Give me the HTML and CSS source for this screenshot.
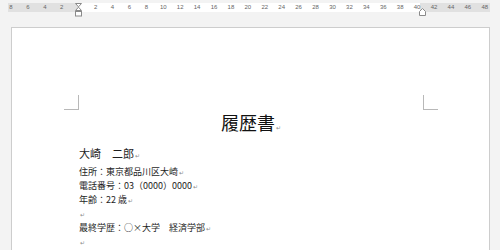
FILE: index.html
```html
<!DOCTYPE html>
<html lang="ja">
<head>
<meta charset="utf-8">
<title>履歴書</title>
<link rel="stylesheet" href="styles.css">
</head>
<body>
<div class="app">
  <div class="ruler">
    <div class="band"></div>
    <div class="ticks">
      <span class="tick">8</span><span class="tick">6</span><span class="tick">4</span><span class="tick">2</span>
      <span class="tick marker">
        <svg class="indent-left" width="8" height="14" viewBox="0 0 8 14">
          <path d="M0.5 0.5 H6.5 L3.5 3.8 Z" fill="#fff" stroke="#8a8a8a" stroke-width="1"/>
          <path d="M3.5 4.2 L6.5 7.5 H0.5 Z" fill="#fff" stroke="#8a8a8a" stroke-width="1"/>
          <rect x="0.5" y="8.5" width="6" height="4.5" fill="#fff" stroke="#8a8a8a" stroke-width="1"/>
        </svg>
      </span>
      <span class="tick">2</span><span class="tick">4</span><span class="tick">6</span><span class="tick">8</span>
      <span class="tick">10</span><span class="tick">12</span><span class="tick">14</span><span class="tick">16</span>
      <span class="tick">18</span><span class="tick">20</span><span class="tick">22</span><span class="tick">24</span>
      <span class="tick">26</span><span class="tick">28</span><span class="tick">30</span><span class="tick">32</span>
      <span class="tick">34</span><span class="tick">36</span><span class="tick">38</span>
      <span class="tick marker">40
        <svg class="indent-right" width="7" height="8" viewBox="0 0 7 8">
          <path d="M0.5 3.5 L3.5 0.5 L6.5 3.5 V7.5 H0.5 Z" fill="#fff" stroke="#8a8a8a" stroke-width="1"/>
        </svg>
      </span>
      <span class="tick">42</span><span class="tick">44</span><span class="tick">46</span><span class="tick">48</span>
    </div>
  </div>
  <div class="canvas">
    <div class="page">
      <div class="content">
        <p class="title">履歴書<span class="ret">↵</span></p>
        <p class="name">大崎　二郎<span class="ret">↵</span></p>
        <p class="line">住所：東京都品川区大崎<span class="ret">↵</span></p>
        <p class="line">電話番号：03（0000）0000<span class="ret">↵</span></p>
        <p class="line">年齢：22 歳<span class="ret">↵</span></p>
        <p class="line"><span class="ret">↵</span></p>
        <p class="line">最終学歴：○×大学　経済学部<span class="ret">↵</span></p>
        <p class="line"><span class="ret">↵</span></p>
      </div>
    </div>
  </div>
</div>
</body>
</html>
```

FILE: styles.css
```css
html, body {
  margin: 0;
  padding: 0;
}

body {
  width: 500px;
  height: 250px;
  overflow: hidden;
  background: #f3f3f3;
  font-family: "Noto Sans CJK JP", "Noto Sans", sans-serif;
  color: #1e1e1e;
}

.app {
  display: flex;
  flex-direction: column;
}

.ruler {
  display: grid;
  height: 9px;
  margin-top: 3px;
}

.band,
.ticks {
  grid-area: 1 / 1;
}

.band {
  margin-left: 8px;
  width: 482px;
  height: 9px;
  background: linear-gradient(to right, #e1e1e1 0 70px, #ffffff 70px 412px, #e1e1e1 412px 482px);
}

.ticks {
  display: flex;
  margin-left: 2.5px;
  height: 9px;
}

.tick {
  flex: 0 0 16.93px;
  text-align: center;
  font-family: "Liberation Sans", Arial, sans-serif;
  font-size: 6px;
  line-height: 9px;
  color: #666666;
}

.marker {
  position: relative;
}

.indent-left {
  position: absolute;
  left: 4.5px;
  top: -0.5px;
}

.indent-right {
  position: absolute;
  left: 10.5px;
  top: 4.5px;
}

.canvas {
  padding: 15px 0 0 11px;
}

.page {
  width: 479px;
  height: 300px;
  box-sizing: border-box;
  background: #ffffff;
  border: 1px solid #cdcdcd;
  padding: 79px 66px 0 67px;
}

.content {
  position: relative;
}

.content::before,
.content::after {
  content: "";
  position: absolute;
  top: -15px;
  width: 14px;
  height: 14px;
  border-bottom: 1px solid #b8b8b8;
}

.content::before {
  left: -15px;
  border-right: 1px solid #b8b8b8;
}

.content::after {
  right: -15px;
  border-left: 1px solid #b8b8b8;
}

p {
  margin: 0;
  white-space: nowrap;
}

.title {
  margin-top: 3px;
  height: 24px;
  text-align: center;
  font-size: 18px;
  line-height: 24px;
  color: #111;
}

.name {
  margin-top: 11px;
  margin-bottom: 4px;
  height: 16px;
  font-size: 11px;
  line-height: 16px;
}

.line {
  height: 14px;
  font-size: 9px;
  line-height: 14px;
}

.ret {
  font-family: "DejaVu Sans", sans-serif;
  font-size: 6px;
  line-height: 0;
  color: #8c8c8c;
  margin-left: 1px;
}
```
